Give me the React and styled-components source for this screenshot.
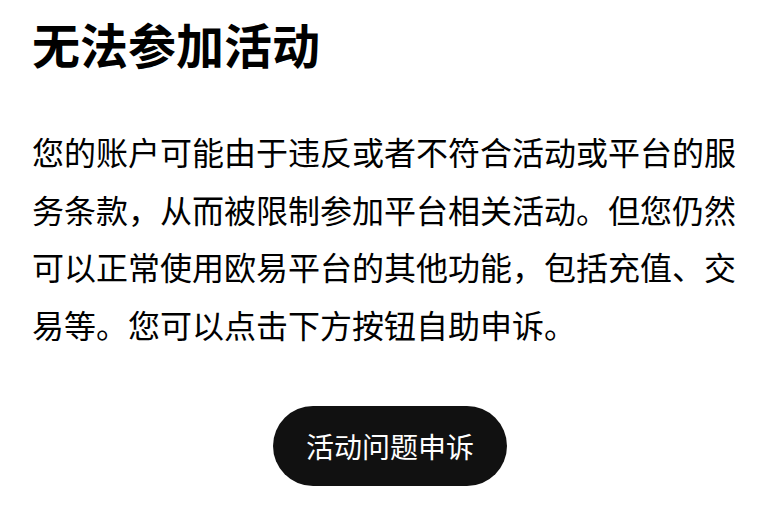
import React from "react";
import styled, { createGlobalStyle } from "styled-components";

const GlobalStyle = createGlobalStyle`
  html, body {
    margin: 0;
    padding: 0;
    background: #ffffff;
  }
  body {
    font-family: "Noto Sans CJK SC", "Noto Sans", sans-serif;
    color: #000000;
  }
`;

const Page = styled.main`
  box-sizing: border-box;
  width: 780px;
  padding: 16px 32px 24px;
  display: flex;
  flex-direction: column;
`;

const Title = styled.h1`
  margin: 0;
  font-size: 48px;
  line-height: 54px;
  font-weight: 700;
  color: #000;
`;

const Body = styled.p`
  margin: 53px 0 0;
  font-size: 32px;
  line-height: 1.8;
  font-weight: 400;
  color: #000;
`;

const Actions = styled.div`
  display: flex;
  justify-content: center;
  margin-top: 52.5px;
`;

const PillButton = styled.button`
  height: 80px;
  padding: 0 32.5px;
  border: none;
  border-radius: 40px;
  background: #111111;
  color: #ffffff;
  font-family: "Noto Sans CJK SC", "Noto Sans", sans-serif;
  font-size: 28px;
  line-height: 80px;
  cursor: pointer;
`;

export default function App() {
  return (
    <>
      <GlobalStyle />
      <Page>
        <Title>无法参加活动</Title>
        <Body>
          您的账户可能由于违反或者不符合活动或平台的服务条款，从而被限制参加平台相关活动。但您仍然可以正常使用欧易平台的其他功能，包括充值、交易等。您可以点击下方按钮自助申诉。
        </Body>
        <Actions>
          <PillButton type="button">活动问题申诉</PillButton>
        </Actions>
      </Page>
    </>
  );
}
